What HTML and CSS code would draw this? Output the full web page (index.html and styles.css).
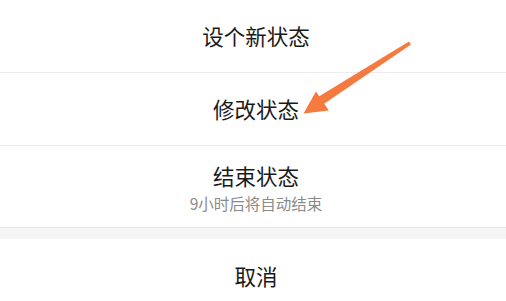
FILE: index.html
```html
<!DOCTYPE html>
<html lang="zh-CN">
<head>
<meta charset="utf-8">
<link rel="stylesheet" href="styles.css">
</head>
<body>
<div class="sheet">
  <div class="group">
    <div class="item">设个新状态</div>
    <div class="item">修改状态</div>
    <div class="item item-sub">
      <div class="title">结束状态</div>
      <div class="sub">9小时后将自动结束</div>
    </div>
  </div>
  <div class="gap"></div>
  <div class="item cancel">取消</div>
  <svg class="arrow" width="506" height="301" viewBox="0 0 506 301">
    <polygon points="409,41.5 411,44.5 323,104.5 318,97" fill="#f47a40"/>
    <polygon points="303.5,113.5 316,91.5 328.8,110.5" fill="#f47a40"/>
  </svg>
</div>
</body>
</html>
```

FILE: styles.css
```css
html, body {
  margin: 0;
  padding: 0;
  background: #ffffff;
}
body {
  width: 506px;
  height: 301px;
  overflow: hidden;
  font-family: "Noto Sans CJK SC", "Noto Sans", sans-serif;
  color: #1a1a1a;
}
.sheet {
  position: relative;
  width: 506px;
  height: 301px;
}
.group {
  display: flex;
  flex-direction: column;
}
.item {
  height: 72px;
  display: flex;
  flex-direction: column;
  align-items: center;
  justify-content: center;
  padding-left: 6px;
  font-size: 21.5px;
  line-height: 28px;
  border-bottom: 1px solid #ececec;
}
.item-sub {
  height: 82px;
  justify-content: flex-start;
  padding-top: 16px;
  box-sizing: border-box;
  border-bottom: 1px solid #e6e6e6;
}
.title {
  line-height: 28px;
}
.sub {
  margin-top: 3px;
  font-size: 15.5px;
  line-height: 20px;
  color: #8a8a8a;
}
.gap {
  height: 11px;
  background: #f5f5f5;
}
.cancel {
  height: 73px;
  border-bottom: none;
}
.arrow {
  position: absolute;
  left: 0;
  top: 0;
}
```
